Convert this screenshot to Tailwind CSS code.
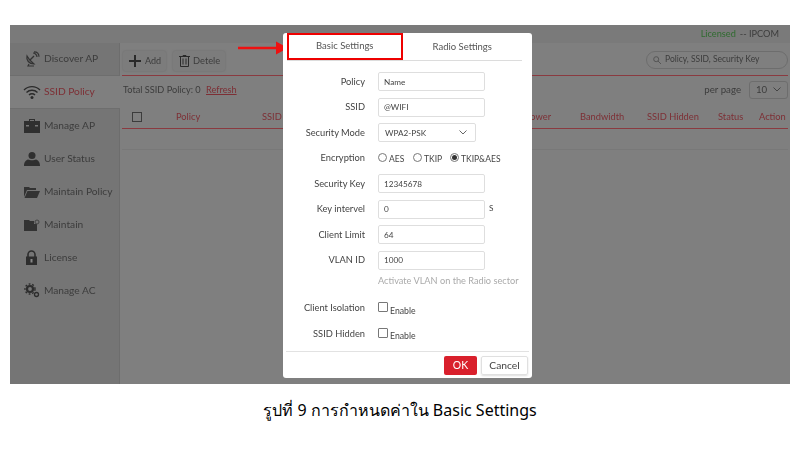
<!doctype html>
<html lang="th">
<head>
<meta charset="utf-8">
<script src="https://cdn.jsdelivr.net/npm/@tailwindcss/browser@4"></script>
</head>
<body class="bg-white w-[800px] h-[450px] overflow-hidden font-['Lato','Open_Sans',sans-serif]">
<div class="pt-[25px] pl-[10px] relative">
  <!-- dimmed app -->
  <div class="w-[780px] h-[359px] bg-[#7f7f7f] flex flex-col text-[#3c3c3c] text-[10px]">
    <div class="h-[18px] bg-[#7a7a7a] flex items-center justify-end pr-[11px] shrink-0 text-[9.200px] blur-[0.4px]">
      <span class="text-[#2f6b2f]">Licensed</span><span class="ml-1">-- IPCOM</span>
    </div>
    <div class="flex flex-1 min-h-0">
      <div class="w-[110px] bg-[#757575] border-r border-[#6d6d6d] shrink-0 text-[10.200px] flex flex-col blur-[0.4px]">
        <div class="h-[33px] flex items-center border-b border-[#6e6e6e]">
          <svg class="ml-[14px] w-[16px] h-[16px]" viewBox="0 0 16 16" fill="none" stroke="#333" stroke-width="1.2"><path d="M3 5c-1 4 2 8 7 8-1-1-5-4-7-8z" fill="#666"/><path d="M6 9l4-4"/><path d="M9 2c2 0 4 2 4 4M10 .8c3 0 5 2 5 5"/><path d="M5 13l-1 2h6"/></svg>
          <span class="ml-[4px]">Discover AP</span>
        </div>
        <div class="h-[33px] flex items-center bg-[#7f7f7f] border-b border-[#6e6e6e] w-[110px]">
          <svg class="ml-[13px] w-[18px] h-[16px]" viewBox="0 0 18 16" fill="none" stroke="#2b2b2b" stroke-width="1.4"><path d="M1 6c4.500-4.500 11.500-4.500 16 0M3.500 8.500c3-3 8-3 11 0M6 11c1.600-1.600 4.400-1.600 6 0"/><circle cx="9" cy="13.500" r="1.500" fill="#2b2b2b" stroke="none"/></svg>
          <span class="ml-[3px] text-[#7d2f35]">SSID Policy</span>
        </div>
        <div class="h-[33px] flex items-center">
          <svg class="ml-[14px] w-[16px] h-[14px]" viewBox="0 0 16 14" fill="#2f2f2f"><path d="M5 2V0h6v2h5v12H0V2zM6 1v1h4V1z"/><rect x="2" y="6" width="3" height="1.500" fill="#777"/><rect x="11" y="6" width="3" height="1.500" fill="#777"/></svg>
          <span class="ml-[4px]">Manage AP</span>
        </div>
        <div class="h-[33px] flex items-center">
          <svg class="ml-[14px] w-[16px] h-[14px]" viewBox="0 0 16 14" fill="#2f2f2f"><circle cx="8" cy="3.500" r="3.500"/><path d="M0 14c0-4 2-6 4-6.500 2 1 6 1 8 0 2 .5 4 2.500 4 6.500z"/></svg>
          <span class="ml-[4px]">User Status</span>
        </div>
        <div class="h-[33px] flex items-center">
          <svg class="ml-[14px] w-[16px] h-[12px]" viewBox="0 0 16 12" fill="#333"><path d="M0 1h5l1 1h6v2H3L0 11z"/><path d="M3.500 5H16l-3 7H0.500z"/></svg>
          <span class="ml-[4px]">Maintain Policy</span>
        </div>
        <div class="h-[33px] flex items-center">
          <svg class="ml-[14px] w-[16px] h-[12px]" viewBox="0 0 16 12" fill="#333"><path d="M0 1h5l1 1h4v3h3v7H0z"/><circle cx="13" cy="3" r="2" fill="none" stroke="#444"/></svg>
          <span class="ml-[4px]">Maintain</span>
        </div>
        <div class="h-[33px] flex items-center">
          <svg class="ml-[15px] w-[13px] h-[15px] mr-[2px]" viewBox="0 0 13 15"><path d="M3 7V4.500a3.500 3.500 0 0 1 7 0V7" fill="none" stroke="#2d2d2d" stroke-width="1.600"/><rect x="1" y="6.500" width="11" height="8.500" fill="#2d2d2d"/><rect x="5.500" y="9" width="2" height="3.500" fill="#888"/></svg>
          <span class="ml-[4px]">License</span>
        </div>
        <div class="h-[33px] flex items-center">
          <svg class="ml-[14px] w-[16px] h-[15px]" viewBox="0 0 16 15" fill="none" stroke="#2d2d2d"><circle cx="6" cy="6" r="3" stroke-width="2.200"/><circle cx="6" cy="6" r="5" stroke-width="1.400" stroke-dasharray="1.800 1.800"/><circle cx="12.500" cy="11.500" r="2" stroke-width="1.300"/></svg>
          <span class="ml-[4px]">Manage AC</span>
        </div>
      </div>
      <div class="flex-1 min-w-0 pl-[2px] pr-[2px] blur-[0.4px]">
        <div class="h-[33px] border-b border-[#8a3a40] flex items-center justify-between pl-[1px] pt-[3px]">
          <div class="flex gap-[7px]">
            <div class="w-[43px] h-[20px] bg-[#7c7c7c] rounded-[2px] flex items-center pl-[6px] gap-[4px] shadow-[0_0_2px_#6a6a6a]">
              <svg class="w-[12px] h-[12px]" viewBox="0 0 12 12" fill="#2a2a2a"><path d="M5 0h2v5h5v2H7v5H5V7H0V5h5z"/></svg><span class="text-[9px]">Add</span>
            </div>
            <div class="w-[52px] h-[20px] bg-[#7c7c7c] rounded-[2px] flex items-center pl-[6px] gap-[3px] shadow-[0_0_2px_#6a6a6a]">
              <svg class="w-[11px] h-[12px]" viewBox="0 0 11 12" fill="none" stroke="#2a2a2a"><path d="M0 1.500h11M4 1.500V.5h3v1M1.500 1.500h8V11.500h-8zM4 3.500v6M7 3.500v6"/></svg><span class="text-[9.300px]">Detele</span>
            </div>
          </div>
          <div class="w-[142px] h-[18px] mb-[2px] rounded-full border border-[#6d6d6d] flex items-center pl-[6px] gap-[4px] text-[8.500px]">
            <svg class="w-[8px] h-[8px]" viewBox="0 0 8 8" fill="none" stroke="#555"><circle cx="3.200" cy="3.200" r="2.500"/><path d="M5 5l3 3"/></svg>
            <span>Policy, SSID, Security Key</span>
          </div>
        </div>
        <div class="h-[25px] flex items-center justify-between pl-[1px] pt-[2px]">
          <div class="text-[9.200px]">Total SSID Policy: 0 <span class="ml-[3px] text-[#7d2f35] underline">Refresh</span></div>
          <div class="flex items-center gap-[8px] text-[9.700px]">
            <span>per page</span>
            <div class="w-[39px] h-[18px] rounded-[3px] border border-[#6d6d6d] flex items-center justify-between px-[6px]">
              <span>10</span>
              <svg class="w-[8px] h-[5px]" viewBox="0 0 8 5" fill="none" stroke="#444"><path d="M.5.500l3.500 3.500 3.500-3.500"/></svg>
            </div>
          </div>
        </div>
        <div class="h-[28px] border-b border-[#8a3a40] flex items-center text-[#7d2f35] text-[9.300px] relative pt-[5px]">
          <span class="ml-[10px] w-[10px] h-[10px] border border-[#3c3c3c] shrink-0"></span>
          <span class="absolute left-[54px]">Policy</span>
          <span class="absolute left-[140px]">SSID</span>
          <span class="absolute left-[403px]">Power</span>
          <span class="absolute left-[458px]">Bandwidth</span>
          <span class="absolute left-[525px]">SSID Hidden</span>
          <span class="absolute left-[596px]">Status</span>
          <span class="absolute left-[637px]">Action</span>
        </div>
        <div class="h-[21px] border-b border-[#787878]"></div>
      </div>
    </div>
  </div>

  <!-- arrow -->
  <svg class="absolute left-[238px] top-[41px] w-[50px] h-[14px]" viewBox="0 0 50 14"><path d="M0 5.800h38V0.500L50 7 38 13.500V8.200H0z" fill="#ee1111"/></svg>

  <!-- modal -->
  <div class="absolute left-[283px] top-[33px] w-[249px] h-[345px] bg-white rounded-[3px] text-[#444] text-[9.300px] flex flex-col">
    <div class="relative h-[28px] ml-[4px] mr-[10px] border-b border-[#dcdcdc] flex items-end shrink-0 text-[#555] text-[9.500px]">
      <div class="w-[116px] h-[27px] border-2 border-[#ee0000] flex items-center justify-center"><span class="blur-[0.4px]">Basic Settings</span></div>
      <div class="w-[120px] h-[26px] flex items-center justify-center"><span class="blur-[0.4px]">Radio Settings</span></div>
    </div>
    <div class="flex flex-col pt-[8px] blur-[0.4px]">
      <div class="h-[25.500px] flex items-center"><span class="w-[82px] text-right">Policy</span><span class="ml-[13px] w-[107px] h-[19px] border border-[#dedede] rounded-[2px] px-[5px] flex items-center text-[8.200px]">Name</span></div>
      <div class="h-[25.500px] flex items-center"><span class="w-[82px] text-right">SSID</span><span class="ml-[13px] w-[107px] h-[19px] border border-[#dedede] rounded-[2px] px-[5px] flex items-center text-[8.200px]">@WIFI</span></div>
      <div class="h-[25.500px] flex items-center"><span class="w-[82px] text-right">Security Mode</span><span class="ml-[13px] w-[98px] h-[19px] border border-[#dedede] rounded-[2px] px-[6px] flex items-center justify-between text-[8.200px]">WPA2-PSK<svg class="w-[8px] h-[5px] mr-[2px]" viewBox="0 0 8 5" fill="none" stroke="#666"><path d="M.5.500l3.500 3.500 3.500-3.500"/></svg></span></div>
      <div class="h-[25.500px] flex items-center"><span class="w-[82px] text-right">Encryption</span>
        <div class="ml-[13px] flex items-center text-[8.500px]">
          <span class="w-[9px] h-[9px] rounded-full border border-[#777] -mt-[2px]"></span><span class="ml-[2px] mt-[2px] w-[14px]">AES</span>
          <span class="ml-[10px] w-[9px] h-[9px] rounded-full border border-[#777] -mt-[2px]"></span><span class="ml-[2px] mt-[2px] w-[16px]">TKIP</span>
          <span class="ml-[10px] w-[9px] h-[9px] rounded-full border border-[#777] -mt-[2px] flex items-center justify-center"><span class="w-[5px] h-[5px] rounded-full bg-[#333]"></span></span><span class="ml-[2px] mt-[2px]">TKIP&amp;AES</span>
        </div>
      </div>
      <div class="h-[25.500px] flex items-center"><span class="w-[82px] text-right">Security Key</span><span class="ml-[13px] w-[107px] h-[19px] border border-[#dedede] rounded-[2px] px-[5px] flex items-center text-[8.200px]">12345678</span></div>
      <div class="h-[25.500px] flex items-center"><span class="w-[82px] text-right">Key intervel</span><span class="ml-[13px] w-[107px] h-[19px] border border-[#dedede] rounded-[2px] px-[5px] flex items-center text-[8.200px]">0</span><span class="ml-[4px] -mt-[2px] text-[8.200px]">S</span></div>
      <div class="h-[25.500px] flex items-center"><span class="w-[82px] text-right">Client Limit</span><span class="ml-[13px] w-[107px] h-[19px] border border-[#dedede] rounded-[2px] px-[5px] flex items-center text-[8.200px]">64</span></div>
      <div class="h-[25.500px] flex items-center"><span class="w-[82px] text-right">VLAN ID</span><span class="ml-[13px] w-[107px] h-[19px] border border-[#dedede] rounded-[2px] px-[5px] flex items-center text-[8.200px]">1000</span></div>
      <div class="h-[16px] pl-[95px] text-[9.200px] text-[#aaa] flex items-center">Activate VLAN on the Radio sector</div>
      <div class="h-[32px] flex items-end"><span class="w-[82px] text-right pb-[6px]">Client Isolation</span><div class="ml-[13px] flex items-center pb-[4px]"><span class="w-[10px] h-[10px] border border-[#777] rounded-[1px] -mt-[3px]"></span><span class="ml-[2px] mt-[3px] text-[8.700px]">Enable</span></div></div>
      <div class="h-[25.500px] flex items-end"><span class="w-[82px] text-right pb-[6px]">SSID Hidden</span><div class="ml-[13px] flex items-center pb-[4px]"><span class="w-[10px] h-[10px] border border-[#777] rounded-[1px] -mt-[3px]"></span><span class="ml-[2px] mt-[3px] text-[8.700px]">Enable</span></div></div>
    </div>
    <div class="mt-auto mx-[3px] h-[27px] border-t border-[#e2e2e2] flex items-start justify-end gap-[4px] pt-[4px] pr-[1px]">
      <div class="w-[33px] h-[19px] bg-[#d9202c] rounded-[2px] text-white flex items-center justify-center text-[10.500px] blur-[0.3px]">OK</div>
      <div class="w-[47px] h-[19px] border border-[#e0e0e0] rounded-[2px] shadow-[0_1px_2px_#ddd] flex items-center justify-center text-[10.300px] blur-[0.3px]">Cancel</div>
    </div>
  </div>

  <div class="text-center text-[16px] leading-[22px] text-black mt-[15px] w-[780px] font-['Noto_Sans','DejaVu_Sans',sans-serif]">รูปที่ 9 การกำหนดค่าใน Basic Settings</div>
</div>
</body>
</html>
